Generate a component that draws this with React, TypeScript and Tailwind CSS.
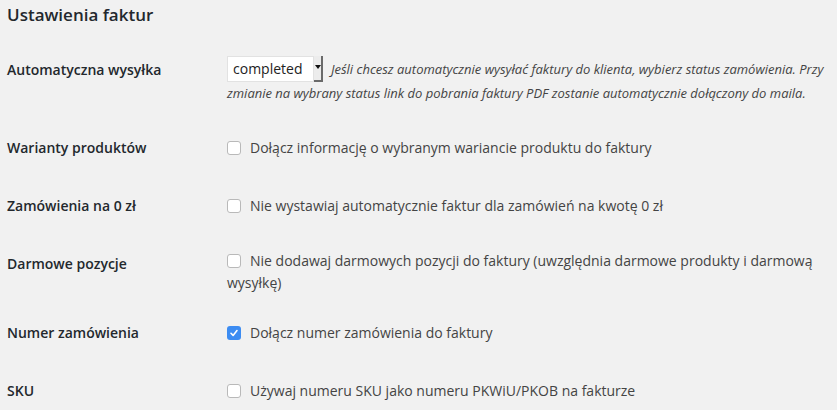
import React from "react";

const font = { fontFamily: '"Open Sans", "Noto Sans", sans-serif' };

function Checkbox({ checked = false }: { checked?: boolean }) {
  return checked ? (
    <span className="inline-flex h-[14px] w-[14px] shrink-0 items-center justify-center rounded-[3px] bg-[#3c8cf2]">
      <svg width="10" height="10" viewBox="0 0 10 10" fill="none">
        <path d="M2 5.3 L4.1 7.4 L8 2.6" stroke="white" strokeWidth="1.6" strokeLinecap="round" strokeLinejoin="round" />
      </svg>
    </span>
  ) : (
    <span className="inline-block h-[14px] w-[14px] shrink-0 rounded-[3px] border border-[#b9b9b9] bg-white" />
  );
}

function Label({ children }: { children: React.ReactNode }) {
  return (
    <div className="w-[220px] shrink-0 pt-5 text-[14px] font-semibold leading-[18px] text-[#23282d]">
      {children}
    </div>
  );
}

function CheckRow({ label, text, checked = false }: { label: string; text: string; checked?: boolean }) {
  return (
    <div className="flex h-[58px] items-start">
      <Label>{label}</Label>
      <div className="mt-5 flex h-[18px] items-center gap-[9px] text-[14px] leading-[18px] text-[#444]">
        <Checkbox checked={checked} />
        <span>{text}</span>
      </div>
    </div>
  );
}

export default function App() {
  return (
    <div className="min-h-[410px] w-[837px] bg-[#f1f1f1] pl-[7px]" style={font}>
      <h2 className="h-[30px] text-[17px] font-semibold leading-[30px] text-[#23282d]">Ustawienia faktur</h2>
      <div className="mt-[11px]">
        <div className="flex h-[78px] items-start">
          <Label>Automatyczna wysyłka</Label>
          <div className="pt-[15px] text-[13px] italic text-[#444]">
            <div className="flex items-center">
              <div className="flex h-[26px] w-[96px] bg-white">
                <div className="flex flex-1 items-center border border-[#e2e2e2] pl-[5px] text-[14px] not-italic leading-none text-[#222]">
                  completed
                </div>
                <div className="flex w-[9px] items-start justify-center border-r-2 border-b-2 border-[#6a6a6a] bg-[#ececec] pt-[9px]">
                  <svg width="6" height="4" viewBox="0 0 6 4">
                    <path d="M0 0 L6 0 L3 4 Z" fill="#111" />
                  </svg>
                </div>
              </div>
              <span className="ml-[8px] leading-[18px]">
                Jeśli chcesz automatycznie wysyłać faktury do klienta, wybierz status zamówienia. Przy
              </span>
            </div>
            <div className="leading-[22px]">
              zmianie na wybrany status link do pobrania faktury PDF zostanie automatycznie dołączony do maila.
            </div>
          </div>
        </div>
        <CheckRow label="Warianty produktów" text="Dołącz informację o wybranym wariancie produktu do faktury" />
        <CheckRow label="Zamówienia na 0 zł" text="Nie wystawiaj automatycznie faktur dla zamówień na kwotę 0 zł" />
        <div className="flex h-[69px] items-start">
          <Label>Darmowe pozycje</Label>
          <div className="pt-[15px] text-[14px] leading-[22px] text-[#444]">
            <div className="flex items-center gap-[9px]">
              <Checkbox />
              <span>Nie dodawaj darmowych pozycji do faktury (uwzględnia darmowe produkty i darmową</span>
            </div>
            <div>wysyłkę)</div>
          </div>
        </div>
        <CheckRow label="Numer zamówienia" text="Dołącz numer zamówienia do faktury" checked />
        <CheckRow label="SKU" text="Używaj numeru SKU jako numeru PKWiU/PKOB na fakturze" />
      </div>
    </div>
  );
}
